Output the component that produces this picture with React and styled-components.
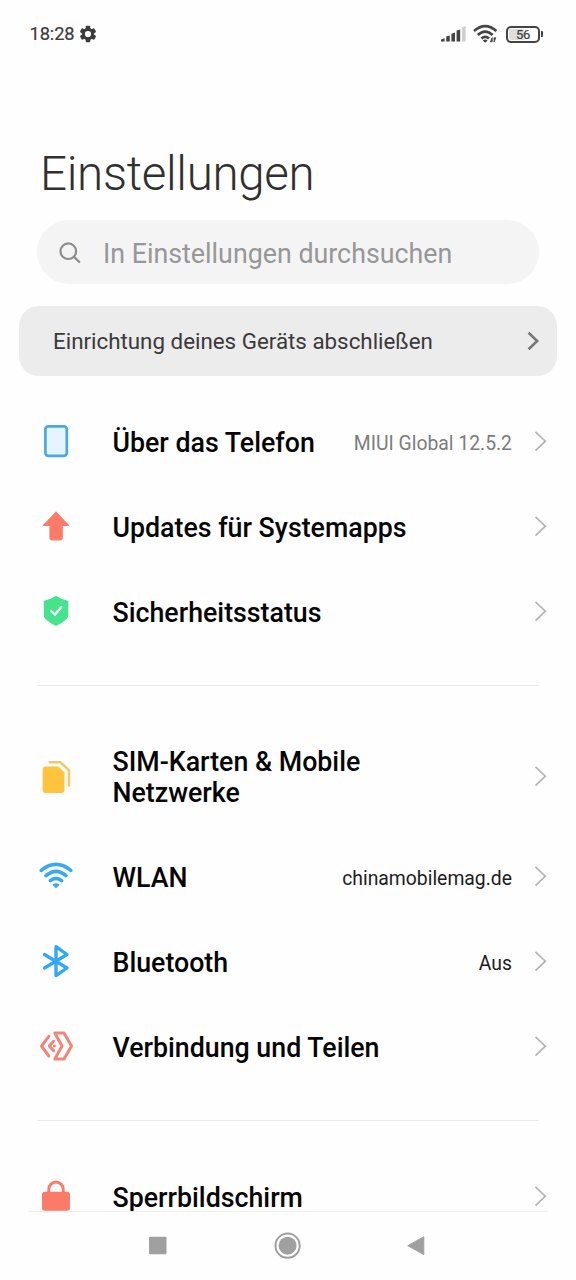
import React from "react";
import styled, { createGlobalStyle } from "styled-components";

const Global = createGlobalStyle`
  * { box-sizing: border-box; }
  body { margin: 0; background: #fefefe; font-family: Roboto, "Noto Sans", sans-serif; }
  svg { display: block; flex: none; }
`;

const Screen = styled.div`
  width: 576px;
  height: 1280px;
  display: flex;
  flex-direction: column;
  overflow: hidden;
  background: #fefefe;
`;

const StatusBar = styled.header`
  height: 68px;
  flex: none;
  display: flex;
  align-items: center;
  justify-content: space-between;
  padding: 0 33px 0 29.5px;
`;

const Clock = styled.div`
  display: flex;
  align-items: center;
  gap: 4px;
  font-size: 18.3px;
  line-height: 22px;
  letter-spacing: -0.1px;
  color: #3c3c3c;
  -webkit-text-stroke: 0.2px #3c3c3c;
`;

const Title = styled.h1`
  margin: 74px 0 0 40px;
  height: 64px;
  flex: none;
  font-size: 47.5px;
  line-height: 64px;
  font-weight: 300;
  letter-spacing: -0.3px;
  white-space: nowrap;
  color: #303030;
`;

const Search = styled.div`
  margin: 14px 37px 0;
  height: 64px;
  flex: none;
  display: flex;
  align-items: center;
  gap: 19px;
  padding: 3px 0 0 19px;
  border-radius: 32px;
  background: #f4f4f4;
  color: #979797;
  font-size: 26.8px;
`;

const SetupCard = styled.div`
  margin: 22px 19px 0;
  height: 70px;
  flex: none;
  display: flex;
  align-items: center;
  justify-content: space-between;
  padding: 0 17px 0 34px;
  border-radius: 20px;
  background: #ececec;
  color: #3a3a3a;
  font-size: 22.35px;
`;

const List = styled.main`
  flex: 1;
  min-height: 0;
  overflow: hidden;
  padding-top: 23px;
`;

const Row = styled.div`
  height: ${(p) => (p.$tall ? 115 : 85)}px;
  display: flex;
  align-items: center;
  padding: 0 29px 1px 36px;
`;

const Label = styled.div`
  flex: 1;
  margin-left: 36.5px;
  padding-top: 4px;
  font-size: 26.75px;
  line-height: 31px;
  font-weight: 500;
  white-space: pre-line;
  color: #050505;
`;

const Value = styled.div`
  margin-right: 22px;
  padding-top: 4px;
  font-size: 19.35px;
  color: ${(p) => (p.$muted ? "#7c7c7c" : "#1c1c1c")};
`;

const Divider = styled.hr`
  margin: 31px 37px 33px;
  border: 0;
  height: 1px;
  background: #ebebeb;
`;

const NavBar = styled.nav`
  height: 69px;
  flex: none;
  display: flex;
  justify-content: space-between;
  align-items: center;
  margin: 0 28px;
  padding: 0 119px 0 117px;
  border-top: 1px solid #f1f1f1;
`;

const StatusCluster = styled.div`
  display: flex;
  align-items: center;
  gap: 7px;
`;

const BatteryShell = styled.div`
  display: flex;
  align-items: center;
  gap: 1px;
`;

const BatteryLevel = styled.div`
  width: 34px;
  height: 17px;
  display: flex;
  align-items: center;
  justify-content: center;
  border: 2px solid #444;
  border-radius: 5px;
  padding: 1px;
  background: linear-gradient(90deg, #dedede 0 54%, #fefefe 54%) content-box;
  color: #3c3c3c;
  font-size: 13px;
  line-height: 11px;
  letter-spacing: -0.2px;
  -webkit-text-stroke: 0.2px #3c3c3c;
`;

const BatteryTip = styled.div`
  width: 2px;
  height: 6px;
  border-radius: 0 1px 1px 0;
  background: #444;
`;

const Gear = () => (
  <svg width="18" height="18" viewBox="0 0 18 18">
    <g fill="#3c3c3c">
      {[0, 60, 120].map((a) => (
        <rect key={a} x="6.7" y="0.8" width="4.6" height="16.4" rx="1" transform={`rotate(${a} 9 9)`} />
      ))}
    </g>
    <circle cx="9" cy="9" r="4.7" fill="none" stroke="#3c3c3c" strokeWidth="3" />
    <circle cx="9" cy="9" r="3.1" fill="#fefefe" />
  </svg>
);

const Signal = () => (
  <svg width="26" height="18" viewBox="0 0 26 18">
    {[
      [1, 13.2, 3.4],
      [6.2, 10.4, 6.2],
      [11.4, 7.6, 9],
      [16.6, 4.4, 12.2],
      [22, 1, 15.6],
    ].map(([x, y, h], i) => (
      <path
        key={x}
        d={`M${x} ${y + 1.2}L${x + 3.6} ${y}V${y + h}H${x}Z`}
        fill={i === 4 ? "#cecece" : "#444"}
      />
    ))}
  </svg>
);

const StatusWifi = () => (
  <svg width="26" height="20" viewBox="0 0 26 20">
    <g fill="none" stroke="#444" strokeWidth="2.7">
      <path d="M1 7Q12.2-2.8 23.4 7" />
      <path d="M4.8 11Q12.2 4.2 19.6 11" />
      <path d="M8.4 14.6Q12.2 11 16 14.6" />
    </g>
    <path d="M9.8 16.4Q12.2 14.6 14.6 16.4L12.2 18.8Z" fill="#444" />
    <path d="M17.4 17.8h1.8v-4.2zM21 18v-4.2h1.8z" fill="#444" stroke="#444" strokeWidth=".8" />
  </svg>
);

const SearchIcon = () => (
  <svg width="28" height="28" viewBox="0 0 28 28" fill="none" stroke="#8e8e8e" strokeWidth="2.2" strokeLinecap="round">
    <circle cx="12.3" cy="11.2" r="7.8" />
    <path d="M18.1 16.9L23.3 22" />
  </svg>
);

const Chevron = ({ bold }) =>
  bold ? (
    <svg width="13" height="20" viewBox="0 0 13 20" fill="none" stroke="#777" strokeWidth="2.6">
      <path d="M1.6 1.7L10.2 10L1.6 18.3" />
    </svg>
  ) : (
    <svg width="13" height="22" viewBox="0 0 13 22" fill="none" stroke="#b4b4b4" strokeWidth="1.7">
      <path d="M1.5 1.8L11.3 11.2L1.5 20.6" />
    </svg>
  );

const blue = "#38a9ef";
const coral = "#fb7b68";

const icons = {
  phone: <rect x="9.4" y="5.3" width="21.4" height="29.6" rx="2.8" fill="#e5f4ff" stroke="#4aa9e3" strokeWidth="2.7" />,
  update: (
    <path
      d="M20 6.2L32.5 19.4H26.2V31.7Q26.2 33.8 24 33.8H16.2Q14 33.8 14 31.7V19.4H7.5Z"
      fill={coral}
      stroke={coral}
      strokeWidth="1.2"
      strokeLinejoin="round"
    />
  ),
  shield: (
    <>
      <path
        d="M20 5.4Q26 9 31.6 10.3V24.4Q31.6 28.4 20 34.2Q8.4 28.4 8.4 24.4V10.3Q14 9 20 5.4Z"
        fill="#46e38d"
        stroke="#46e38d"
        strokeWidth="1.2"
        strokeLinejoin="round"
      />
      <path d="M15.2 20L19 23.5L25.3 16" fill="none" stroke="#fff" strokeWidth="2.3" strokeLinecap="round" />
    </>
  ),
  sim: (
    <>
      <path d="M13.8 6.3H24.5L33 14.3V29.5" fill="none" stroke="#f9c660" strokeWidth="2.5" strokeLinecap="round" strokeLinejoin="round" />
      <path d="M10 10.4H22.5L28.5 16.4V33.9Q28.5 36.9 25.5 36.9H9.6Q6.6 36.9 6.6 33.9V13.4Q6.6 10.4 10 10.4Z" fill="#ffc43e" />
    </>
  ),
  wifi: (
    <>
      <g fill="none" stroke={blue} strokeWidth="3.6" strokeLinecap="round">
        <path d="M5.2 14.4Q20 2.5 34.8 14.4" />
        <path d="M10 19.7Q20 11.1 30 19.7" />
        <path d="M14.3 24.7Q20 20 25.7 24.7" />
      </g>
      <path d="M17.7 28.8Q20 27.6 22.3 28.8L20 30.9Z" fill={blue} stroke={blue} strokeWidth="2" strokeLinejoin="round" />
    </>
  ),
  bluetooth: (
    <path
      d="M8.5 13.5L31 27L20 34.6V5.6L31 13.5L8.5 27"
      fill="none"
      stroke="#30a8f6"
      strokeWidth="3.3"
      strokeLinejoin="round"
      strokeLinecap="round"
    />
  ),
  share: (
    <g fill="none" stroke="#f18577" strokeWidth="3" strokeLinejoin="round" strokeLinecap="round">
      <path d="M18.8 7H28L35.5 20L28 33.1H18.8L26 20Z" />
      <path d="M12.8 10.3L5.5 20L12.8 30" />
      <path d="M17.6 15.3L13.2 20L17.6 24.6" />
      <path d="M18.3 20h.1" />
    </g>
  ),
  lock: (
    <>
      <path d="M12.8 17V13.2A7.2 7.2 0 0 1 27.2 13.2V17" fill="none" stroke={coral} strokeWidth="2.9" />
      <rect x="6" y="15.7" width="28" height="19" rx="3" fill={coral} />
    </>
  ),
};

const Item = ({ icon, label, value, muted, tall }) => (
  <Row $tall={tall}>
    <svg width="40" height="40" viewBox="0 0 40 40">{icons[icon]}</svg>
    <Label>{label}</Label>
    {value && <Value $muted={muted}>{value}</Value>}
    <Chevron />
  </Row>
);

export default function App() {
  return (
    <Screen>
      <Global />
      <StatusBar>
        <Clock>
          <span>18:28</span>
          <Gear />
        </Clock>
        <StatusCluster>
          <Signal />
          <StatusWifi />
          <BatteryShell>
            <BatteryLevel>56</BatteryLevel>
            <BatteryTip />
          </BatteryShell>
        </StatusCluster>
      </StatusBar>
      <Title>Einstellungen</Title>
      <Search>
        <SearchIcon />
        <span>In Einstellungen durchsuchen</span>
      </Search>
      <SetupCard>
        <span>Einrichtung deines Geräts abschließen</span>
        <Chevron bold />
      </SetupCard>
      <List>
        <Item icon="phone" label="Über das Telefon" value="MIUI Global 12.5.2" muted />
        <Item icon="update" label="Updates für Systemapps" />
        <Item icon="shield" label="Sicherheitsstatus" />
        <Divider />
        <Item icon="sim" label={"SIM-Karten & Mobile\nNetzwerke"} tall />
        <Item icon="wifi" label="WLAN" value="chinamobilemag.de" />
        <Item icon="bluetooth" label="Bluetooth" value="Aus" />
        <Item icon="share" label="Verbindung und Teilen" />
        <Divider />
        <Item icon="lock" label="Sperrbildschirm" />
      </List>
      <NavBar>
        <svg width="26" height="26" viewBox="0 0 26 26">
          <rect x="4" y="3.7" width="17.5" height="17.5" rx="1" fill="#a0a0a0" />
        </svg>
        <svg width="28" height="28" viewBox="0 0 28 28">
          <circle cx="14.6" cy="13.7" r="12.1" fill="none" stroke="#a0a0a0" strokeWidth="2" />
          <circle cx="14.6" cy="13.7" r="9" fill="#a0a0a0" />
        </svg>
        <svg width="26" height="26" viewBox="0 0 26 26">
          <path d="M4.8 12.7L20.8 3.8V21.6Z" fill="#a0a0a0" stroke="#a0a0a0" strokeLinejoin="round" />
        </svg>
      </NavBar>
    </Screen>
  );
}
